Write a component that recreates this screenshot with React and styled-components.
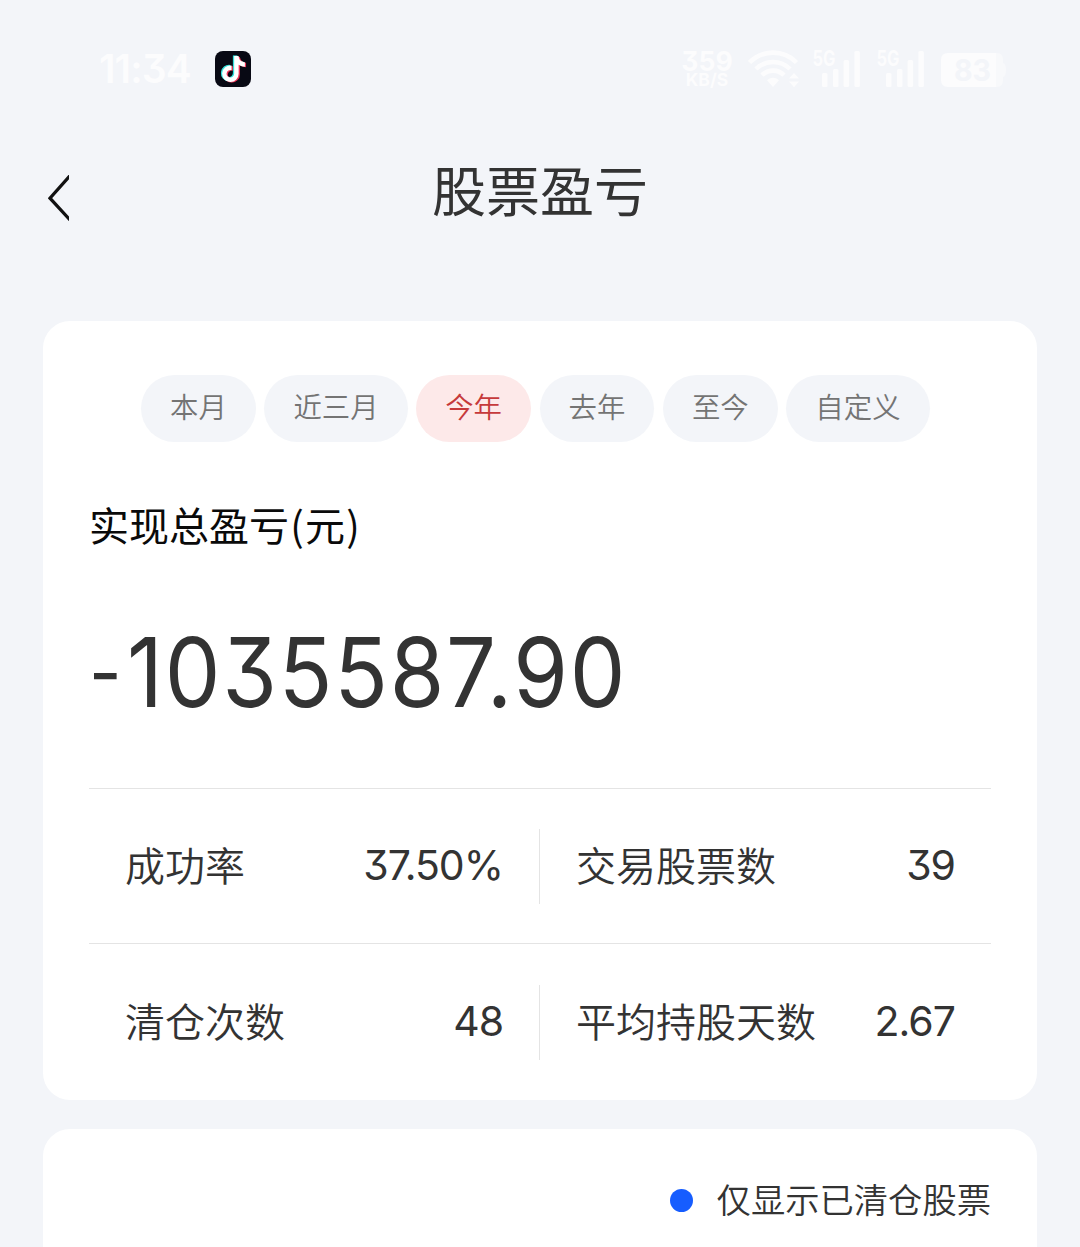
import React from "react";
import styled, { createGlobalStyle, css } from "styled-components";
import { FaTiktok } from "react-icons/fa6";

const GlobalStyle = createGlobalStyle`
  * { box-sizing: border-box; }
  html { background: #f3f5f9; }
  body {
    margin: 0;
    background: #f3f5f9;
    color: #333333;
    font-family: "Noto Sans CJK SC", "Noto Sans", sans-serif;
    overflow: hidden;
  }
`;

const digits = css`
  font-family: Inter, "Liberation Sans", sans-serif;
  font-feature-settings: "cv09" 1;
  white-space: nowrap;
`;

const Screen = styled.div`
  width: 1080px;
  height: 1247px;
  overflow: hidden;
  display: flex;
  flex-direction: column;
`;

const StatusBar = styled.header`
  flex: none;
  height: 138px;
  padding: 0 73px 0 99px;
  display: flex;
  align-items: center;
  color: #fcfcfd;
`;

const Clock = styled.span`
  ${digits}
  width: 116px;
  font-size: 39px;
  font-weight: 600;
  line-height: 40px;
  letter-spacing: -0.9px;
`;

const AppBadge = styled.span`
  width: 36px;
  height: 36px;
  border-radius: 8px;
  background: #080914;
  display: grid;
  place-items: center;
  margin-right: auto;
`;

const Note = styled(FaTiktok)`
  grid-area: 1 / 1;
  width: 23px;
  height: 26px;
  color: ${(p) => p.$tone};
  transform: translate(${(p) => p.$shift}px, ${(p) => p.$shift * 0.5}px);
`;

const Speed = styled.span`
  ${digits}
  display: flex;
  flex-direction: column;
  align-items: center;
  width: 52px;
  margin-right: 15px;
  font-weight: 700;
`;

const SpeedValue = styled.span`
  font-size: 26.5px;
  line-height: 20px;
  height: 20px;
`;

const SpeedUnit = styled.span`
  font-size: 17.5px;
  line-height: 18px;
  height: 17px;
`;

const WifiIcon = styled.svg`
  width: 52px;
  height: 38px;
  margin-right: 12px;
`;

const SignalIcon = styled.svg`
  width: 50px;
  height: 38px;
  margin-right: 14px;
  overflow: visible;
`;

const BatteryIcon = styled.svg`
  width: 67px;
  height: 38px;
  overflow: visible;
`;

const NavBar = styled.nav`
  flex: none;
  height: 183px;
  display: grid;
  grid-template-columns: 48px 200px 1fr 248px;
  align-items: start;
`;

const BackIcon = styled.svg`
  grid-column: 2;
  width: 21px;
  height: 46px;
  margin-top: 37px;
`;

const Title = styled.h1`
  margin: 11px 0 0;
  text-align: center;
  font-size: 54px;
  line-height: 80px;
  font-weight: 400;
`;

const Card = styled.section`
  margin: 0 43px 29px;
  border-radius: 27px;
  background: #ffffff;
  flex: none;
`;

const SummaryCard = styled(Card)`
  height: 779px;
  padding: 54px 46px 0;
`;

const PillRow = styled.div`
  display: flex;
  gap: 8.6px;
  padding-left: 52px;
`;

const Pill = styled.button`
  height: 67px;
  border: 0;
  border-radius: 34px;
  padding: 0 29px 5px;
  font: 350 28.4px/62px "Noto Sans CJK SC", sans-serif;
  white-space: nowrap;
  color: ${(p) => (p.$active ? "#c6393b" : "#747474")};
  background: ${(p) => (p.$active ? "#fde9e9" : "#f3f5f9")};
`;

const TotalLabel = styled.div`
  margin-top: 52px;
  height: 63px;
  font-size: 40px;
  line-height: 60px;
  color: #0a0a0a;
`;

const Paren = styled.span`
  display: inline-block;
  width: 16px;
  text-align: center;
`;

const TotalValue = styled.div`
  ${digits}
  display: flex;
  height: 231px;
  font-size: 96px;
  line-height: 231px;
  letter-spacing: 1.9px;
  font-weight: 370;
  transform: scaleX(0.92);
  transform-origin: left;
`;

const Sign = styled.span`
  font-size: 77px;
  letter-spacing: 0;
  margin-right: 6px;
`;

const StatRow = styled.div`
  height: ${(p) => p.$height}px;
  border-top: 1px solid #e4e4e4;
  display: flex;
  align-items: center;
`;

const Stat = styled.div`
  width: 450px;
  height: 75px;
  padding: 0 36px;
  display: flex;
  align-items: center;
  justify-content: space-between;

  & + & {
    width: 452px;
    border-left: 1px solid #e4e4e4;
  }
`;

const StatLabel = styled.span`
  font-size: 40px;
  line-height: 60px;
  padding-bottom: 4px;
  white-space: nowrap;
  font-weight: 350;
`;

const StatValue = styled.span`
  ${digits}
  font-size: 41px;
  line-height: 60px;
  letter-spacing: -1px;
  padding-bottom: 2px;
  font-weight: 370;
`;

const ListCard = styled(Card)`
  height: 160px;
  margin-bottom: 0;
  padding: 43px 46px 0;
`;

const Filter = styled.div`
  display: flex;
  justify-content: flex-end;
  align-items: center;
  font-size: 34.3px;
  line-height: 54px;
  font-weight: 350;
`;

const FilterText = styled.span`
  margin-top: -1px;
`;

const Dot = styled.span`
  width: 23px;
  height: 23px;
  margin: 4px 24px 0 0;
  border-radius: 50%;
  background: #165dff;
`;

const FILTERS = ["本月", "近三月", "今年", "去年", "至今", "自定义"];

const STATS = [
  { height: 155, items: [["成功率", "37.50%"], ["交易股票数", "39"]] },
  { height: 157, items: [["清仓次数", "48"], ["平均持股天数", "2.67"]] },
];

function Signal() {
  return (
    <SignalIcon viewBox="0 0 50 38" fill="currentColor">
      <text x="0.5" y="16" fontFamily="Inter, sans-serif" fontSize="21" fontWeight="700" textLength="23" lengthAdjust="spacingAndGlyphs">5G</text>
      <rect x="10" y="23" width="5.5" height="14" rx="1.5" />
      <rect x="21" y="19" width="5.5" height="18" rx="1.5" />
      <rect x="31.6" y="10" width="5.5" height="27" rx="1.5" />
      <rect x="42.4" y="1" width="5.5" height="36" rx="1.5" />
    </SignalIcon>
  );
}

export default function App() {
  return (
    <>
      <GlobalStyle />
      <Screen>
        <StatusBar>
          <Clock>11:34</Clock>
          <AppBadge>
            <Note $tone="#35e0dc" $shift={-1.3} />
            <Note $tone="#f0365a" $shift={1.3} />
            <Note $tone="#ffffff" $shift={0} />
          </AppBadge>
          <Speed>
            <SpeedValue>359</SpeedValue>
            <SpeedUnit>KB/S</SpeedUnit>
          </Speed>
          <WifiIcon viewBox="0 0 52 38" fill="none" stroke="currentColor" strokeWidth="4.6">
            <path d="M1.5 12.5A33 33 0 0 1 48.5 12.5" />
            <path d="M8 19A24 24 0 0 1 42 19" />
            <path d="M14 25.2A15.5 15.5 0 0 1 36 25.2" />
            <path d="M25 37L19 30.2Q25 25.4 31 30.2Z" fill="currentColor" stroke="none" />
            <path d="M41 28.5L46 23L51 28.5ZM41 31.5L46 37.2L51 31.5Z" fill="currentColor" stroke="none" />
          </WifiIcon>
          <Signal />
          <Signal />
          <BatteryIcon viewBox="0 0 67 38">
            <path d="M55 3H57Q63 3 63 10V13Q66 14 66 20T63 27V30Q63 37 57 37H55Z" fill="#f8f9fb" />
            <path d="M8 3H56V37H8Q1 37 1 30V10Q1 3 8 3Z" fill="currentColor" />
            <text x="14" y="31" fontFamily="Inter, sans-serif" fontSize="30" fontWeight="700" fill="#f3f5f9" textLength="37" lengthAdjust="spacingAndGlyphs">83</text>
          </BatteryIcon>
        </StatusBar>

        <NavBar>
          <BackIcon viewBox="0 0 21 46" fill="none" stroke="#111111" strokeWidth="3.2">
            <path d="M23 -0.5L2 23.2L23 46" />
          </BackIcon>
          <Title>股票盈亏</Title>
        </NavBar>

        <SummaryCard>
          <PillRow>
            {FILTERS.map((name) => (
              <Pill key={name} $active={name === "今年"}>{name}</Pill>
            ))}
          </PillRow>
          <TotalLabel>
            实现总盈亏<Paren>(</Paren>元<Paren>)</Paren>
          </TotalLabel>
          <TotalValue>
            <Sign>-</Sign>
            <span>1035587.90</span>
          </TotalValue>
          {STATS.map((row) => (
            <StatRow key={row.height} $height={row.height}>
              {row.items.map(([label, value]) => (
                <Stat key={label}>
                  <StatLabel>{label}</StatLabel>
                  <StatValue>{value}</StatValue>
                </Stat>
              ))}
            </StatRow>
          ))}
        </SummaryCard>

        <ListCard>
          <Filter>
            <Dot />
            <FilterText>仅显示已清仓股票</FilterText>
          </Filter>
        </ListCard>
      </Screen>
    </>
  );
}
